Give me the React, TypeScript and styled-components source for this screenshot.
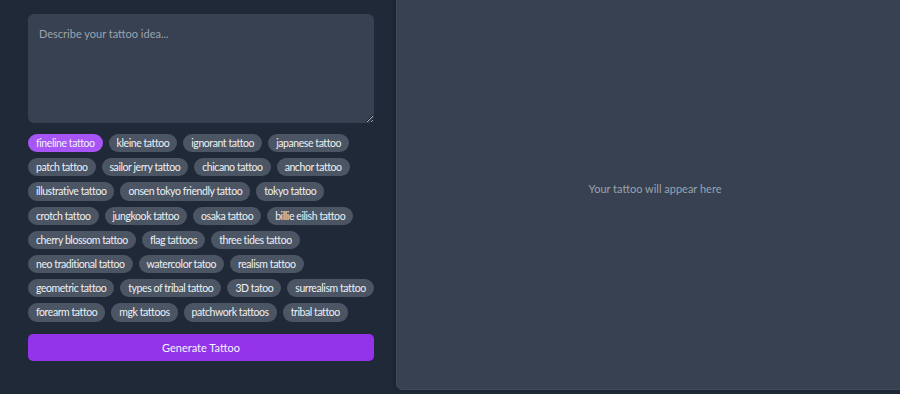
import React, { useState } from "react";
import styled, { createGlobalStyle } from "styled-components";

const Global = createGlobalStyle`
  html, body { margin: 0; padding: 0; background: #1f2937; overflow: hidden; }
  body { font-family: Lato, "Noto Sans", sans-serif; }
  * { box-sizing: border-box; }
`;

const Page = styled.div`
  display: grid;
  grid-template-columns: 346px 518px;
  column-gap: 22px;
  padding: 14px 0 0 28px;
  width: 900px;
  height: 394px;
  overflow: hidden;
  background: #1f2937;
`;

const Left = styled.div`
  display: flex;
  flex-direction: column;
`;

const Prompt = styled.textarea`
  width: 346px;
  height: 109px;
  background: #374151;
  border: none;
  border-radius: 6px;
  padding: 13px 11px;
  color: #e5e7eb;
  font-family: Lato, "Noto Sans", sans-serif;
  font-size: 11px;
  outline: none;
  resize: vertical;
  &::placeholder { color: #9ca3af; }
`;

const Chips = styled.div`
  display: flex;
  flex-wrap: wrap;
  column-gap: 6px;
  row-gap: 6px;
  margin-top: 11px;
`;

const Chip = styled.button<{ $active?: boolean }>`
  height: 18.2px;
  padding: 0 8px;
  border: none;
  border-radius: 9px;
  background: ${(p) => (p.$active ? "#a855f7" : "#4b5563")};
  color: #eef0f3;
  font-family: Lato, "Noto Sans", sans-serif;
  font-size: 10.5px;
  letter-spacing: -0.43px;
  line-height: 18px;
  white-space: nowrap;
  cursor: pointer;
`;

const Generate = styled.button`
  margin-top: 12px;
  height: 27px;
  width: 100%;
  border: none;
  border-radius: 5px;
  background: #9333ea;
  color: #f5f3ff;
  font-family: Lato, "Noto Sans", sans-serif;
  font-size: 11px;
  cursor: pointer;
`;

const Preview = styled.div`
  margin-top: -28px;
  height: 404px;
  background: #374151;
  border: 1px solid #414b5c;
  border-radius: 6px;
  box-shadow: -2px 0 4px rgba(0, 0, 0, 0.15);
  display: flex;
  align-items: center;
  justify-content: center;
  color: #9ca3af;
  font-size: 11px;
`;

const tags = [
  "fineline tattoo", "kleine tattoo", "ignorant tattoo", "japanese tattoo",
  "patch tattoo", "sailor jerry tattoo", "chicano tattoo", "anchor tattoo",
  "illustrative tattoo", "onsen tokyo friendly tattoo", "tokyo tattoo",
  "crotch tattoo", "jungkook tattoo", "osaka tattoo", "billie eilish tattoo",
  "cherry blossom tattoo", "flag tattoos", "three tides tattoo",
  "neo traditional tattoo", "watercolor tatoo", "realism tattoo",
  "geometric tattoo", "types of tribal tattoo", "3D tatoo", "surrealism tattoo",
  "forearm tattoo", "mgk tattoos", "patchwork tattoos", "tribal tattoo",
];

export default function App() {
  const [active, setActive] = useState("fineline tattoo");
  return (
    <>
      <Global />
      <Page>
        <Left>
          <Prompt placeholder="Describe your tattoo idea..." />
          <Chips>
            {tags.map((t) => (
              <Chip key={t} $active={t === active} onClick={() => setActive(t)}>
                {t}
              </Chip>
            ))}
          </Chips>
          <Generate>Generate Tattoo</Generate>
        </Left>
        <Preview>Your tattoo will appear here</Preview>
      </Page>
    </>
  );
}
